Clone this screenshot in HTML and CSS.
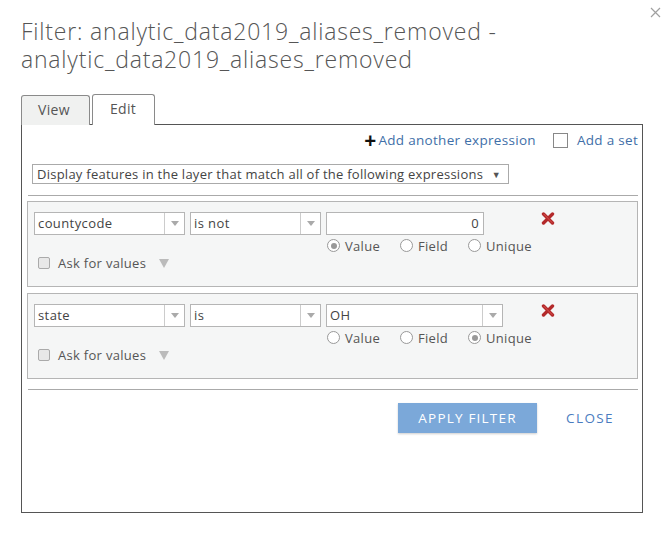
FILE: index.html
```html
<!DOCTYPE html>
<html>
<head>
<meta charset="utf-8">
<link rel="stylesheet" href="styles.css">
</head>
<body>
<div class="dialog">
  <span class="close-x">
    <svg width="11" height="11" viewBox="0 0 11 11"><path d="M1 1L10 10M10 1L1 10" stroke="#a0a0a0" stroke-width="1.2"/></svg>
  </span>
  <h1 class="title">Filter: analytic_data2019_aliases_removed -<br>analytic_data2019_aliases_removed</h1>
  <div class="tabs">
    <div class="tab">View</div>
    <div class="tab active">Edit</div>
  </div>
  <div class="panel">
    <div class="add-row">
      <span class="add-expr"><span class="plus">+</span>Add another expression</span>
      <span class="add-set"><span class="box"></span>Add a set</span>
    </div>
    <div class="mode-select">
      <span>Display features in the layer that match all of the following expressions</span>
      <span class="small-arrow">▼</span>
    </div>
    <div class="rule"></div>

    <div class="expr">
      <div class="expr-main">
        <div class="sel w-field"><span class="sel-text">countycode</span><span class="sel-arrow"></span></div>
        <div class="sel w-op"><span class="sel-text">is not</span><span class="sel-arrow"></span></div>
        <div class="val-col">
          <div class="input num">0</div>
          <div class="radios">
            <span class="radio checked"></span><span class="rlabel">Value</span>
            <span class="radio"></span><span class="rlabel">Field</span>
            <span class="radio"></span><span class="rlabel">Unique</span>
          </div>
        </div>
        <span class="del">
          <svg width="14" height="13" viewBox="0 0 14 13"><path d="M2.5 2L11.5 11M11.5 2L2.5 11" stroke="#b3292a" stroke-width="3.4" stroke-linecap="round"/><path d="M3 2.3L11 10.5" stroke="#d9524f" stroke-width="1" stroke-linecap="round"/></svg>
        </span>
      </div>
      <div class="ask"><span class="cbox"></span><span>Ask for values</span><span class="ask-arrow"></span></div>
    </div>

    <div class="expr">
      <div class="expr-main">
        <div class="sel w-field"><span class="sel-text">state</span><span class="sel-arrow"></span></div>
        <div class="sel w-op"><span class="sel-text">is</span><span class="sel-arrow"></span></div>
        <div class="val-col">
          <div class="sel w-val"><span class="sel-text">OH</span><span class="sel-arrow"></span></div>
          <div class="radios">
            <span class="radio"></span><span class="rlabel">Value</span>
            <span class="radio"></span><span class="rlabel">Field</span>
            <span class="radio checked"></span><span class="rlabel">Unique</span>
          </div>
        </div>
        <span class="del">
          <svg width="14" height="13" viewBox="0 0 14 13"><path d="M2.5 2L11.5 11M11.5 2L2.5 11" stroke="#b3292a" stroke-width="3.4" stroke-linecap="round"/><path d="M3 2.3L11 10.5" stroke="#d9524f" stroke-width="1" stroke-linecap="round"/></svg>
        </span>
      </div>
      <div class="ask"><span class="cbox"></span><span>Ask for values</span><span class="ask-arrow"></span></div>
    </div>

    <div class="rule rule2"></div>
    <div class="actions">
      <button class="apply">APPLY FILTER</button>
      <span class="close-btn">CLOSE</span>
    </div>
  </div>
</div>
</body>
</html>
```

FILE: styles.css
```css
* { box-sizing: border-box; }
html, body { margin: 0; padding: 0; background: #fff; }
body {
  font-family: "Open Sans", "Lato", sans-serif;
  color: #4c4c4c;
  width: 666px;
  height: 537px;
  overflow: hidden;
  letter-spacing: 0.3px;
}
.dialog {
  position: relative;
  padding: 17px 0 0 21px;
}
.close-x {
  position: absolute;
  left: 650px;
  top: 7px;
  line-height: 0;
}
.title {
  margin: 0;
  font-weight: 300;
  font-size: 23px;
  line-height: 28px;
  letter-spacing: 0.8px;
  color: #555;
}
.tabs {
  display: flex;
  margin-top: 21px;
  gap: 2px;
  height: 31px;
  align-items: flex-end;
  position: relative;
  z-index: 2;
}
.tab {
  height: 30px;
  border: 1px solid #8a8a8a;
  border-bottom: none;
  border-radius: 3px 3px 0 0;
  background: #f0f1f0;
  font-size: 14px;
  line-height: 28px;
  padding: 0 0 0 16px;
  color: #555;
}
.tab:first-child { width: 69px; }
.tab.active {
  height: 31px;
  background: #fff;
  width: 63px;
  padding: 0 0 0 17px;
}
.panel {
  width: 622px;
  height: 389px;
  border: 1px solid #555;
  margin-top: -1px;
  padding: 0 4px 0 5px;
  display: flex;
  flex-direction: column;
}
.add-row {
  display: flex;
  justify-content: flex-end;
  align-items: center;
  height: 28px;
  padding-top: 2px;
  font-size: 13.5px;
  color: #3f6fa8;
}
.add-expr { display: flex; align-items: center; }
.plus {
  font-size: 21px;
  font-weight: 700;
  color: #111;
  margin-right: 2px;
  line-height: 14px;
}
.add-set { display: flex; align-items: center; margin-left: 17px; }
.box {
  width: 15px;
  height: 15px;
  border: 1px solid #888;
  background: #fff;
  margin-right: 9px;
}
.mode-select {
  margin: 11px 0 0 5px;
  width: 477px;
  height: 20px;
  border: 1px solid #aaa;
  display: flex;
  justify-content: space-between;
  align-items: center;
  padding: 0 7px 0 4px;
  font-size: 13px;
  letter-spacing: 0.25px;
  color: #444;
}
.small-arrow { font-size: 9px; color: #555; }
.rule {
  height: 1px;
  background: #aaa;
  margin: 11px 0 0 1px;
}
.expr {
  margin-top: 5px;
  height: 86px;
  border: 1px solid #b5b5b5;
  background: #f5f6f6;
  padding: 10px 0 0 6px;
}
.expr + .expr { margin-top: 6px; }
.expr-main {
  display: flex;
  align-items: flex-start;
  gap: 5px;
}
.sel {
  height: 23px;
  border: 1px solid #b5b5b5;
  background: #fff;
  display: flex;
  font-size: 13px;
  letter-spacing: 0.4px;
  color: #444;
}
.sel-text {
  flex: 1;
  padding-left: 3px;
  line-height: 21px;
}
.sel-arrow {
  width: 20px;
  border-left: 1px solid #ccc;
  position: relative;
}
.sel-arrow::after {
  content: "";
  position: absolute;
  left: 6px;
  top: 8px;
  border-left: 4px solid transparent;
  border-right: 4px solid transparent;
  border-top: 5px solid #aaa;
}
.w-field { width: 151px; }
.w-op { width: 131px; }
.w-val { width: 177px; }
.val-col { width: 210px; flex: none; }
.input {
  height: 23px;
  width: 158px;
  border: 1px solid #b5b5b5;
  background: #fff;
  font-size: 13px;
  line-height: 21px;
  padding-right: 4px;
  color: #444;
}
.input.num { text-align: right; }
.radios {
  display: flex;
  align-items: center;
  font-size: 13px;
  margin-top: 3px;
  padding-left: 1px;
  height: 15px;
  color: #555;
}
.radio {
  width: 13px;
  height: 13px;
  border: 1px solid #999;
  border-radius: 50%;
  background: #fff;
  margin-right: 5px;
  position: relative;
  flex: none;
}
.radio.checked::after {
  content: "";
  position: absolute;
  left: 2.5px;
  top: 2.5px;
  width: 6px;
  height: 6px;
  border-radius: 50%;
  background: #999;
}
.rlabel { margin-right: 20px; }
.del { line-height: 0; }
.ask {
  display: flex;
  align-items: center;
  font-size: 13px;
  color: #555;
  margin-top: 1px;
  padding-left: 4px;
}
.cbox {
  width: 12px;
  height: 12px;
  border: 1px solid #aaa;
  border-radius: 2px;
  background: #e8e8e8;
  margin-right: 8px;
}
.ask-arrow {
  margin-left: 13px;
  border-left: 5px solid transparent;
  border-right: 5px solid transparent;
  border-top: 9px solid #bbb;
}
.rule2 { margin-top: 10px; }
.actions {
  display: flex;
  justify-content: flex-end;
  align-items: center;
  margin-top: 13px;
  padding-right: 24px;
}
.apply {
  width: 139px;
  height: 30px;
  border: none;
  background: #7ba8d9;
  color: #fff;
  font-family: "Open Sans", sans-serif;
  font-size: 13.5px;
  letter-spacing: 1.2px;
  box-shadow: 0 1px 2px rgba(0,0,0,0.2);
  padding: 0;
}
.close-btn {
  margin-left: 29px;
  font-size: 13.5px;
  color: #4a7cbf;
  letter-spacing: 1.4px;
}
```
